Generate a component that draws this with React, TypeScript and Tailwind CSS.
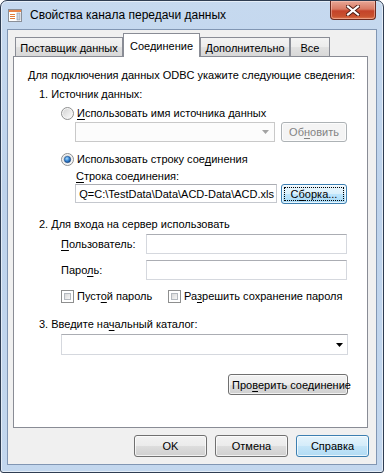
import type { ReactNode } from "react"

const ui = "font-['Liberation_Sans',Arial,sans-serif] text-[11px] leading-[16px] text-black whitespace-nowrap"

function U({ children }: { children: ReactNode }) {
  return <span className="underline underline-offset-[2px]">{children}</span>
}

function Radio({ checked }: { checked?: boolean }) {
  return (
    <svg width="13" height="13" viewBox="0 0 13 13" className="shrink-0">
      <defs>
        <linearGradient id={checked ? "rb1" : "rb0"} x1="0" y1="0" x2="1" y2="1">
          <stop offset="0" stopColor="#d4d4d4" />
          <stop offset="1" stopColor="#fbfbfb" />
        </linearGradient>
        <radialGradient id="rdot" cx="0.4" cy="0.35" r="0.7">
          <stop offset="0" stopColor="#a9dcff" />
          <stop offset="0.5" stopColor="#3b8ad8" />
          <stop offset="1" stopColor="#0f3f80" />
        </radialGradient>
      </defs>
      <circle cx="6.5" cy="6.5" r="6" fill="#f4f4f4" stroke="#8e8f8f" />
      <circle cx="6.5" cy="6.5" r="4.5" fill={`url(#${checked ? "rb1" : "rb0"})`} />
      {checked && <circle cx="6.5" cy="6.5" r="3.2" fill="url(#rdot)" stroke="#1d4b84" strokeWidth="0.6" />}
    </svg>
  )
}

function Check() {
  return (
    <div className="w-[13px] h-[13px] shrink-0 border border-[#8e8f8f] bg-white p-[2px]">
      <div className="w-full h-full border border-[#b4b9bf] bg-[linear-gradient(135deg,#d9d9d9_0%,#f7f7f7_100%)]" />
    </div>
  )
}

function Arrow({ color }: { color: string }) {
  return (
    <svg width="7" height="4" viewBox="0 0 7 4">
      <path d="M0 0h7L3.5 4z" fill={color} />
    </svg>
  )
}

type Kind = "normal" | "disabled" | "focus" | "default"

function Btn({ children, w, h, kind = "normal" }: { children: ReactNode; w: string; h: string; kind?: Kind }) {
  const look =
    kind === "disabled"
      ? "border-[#adb2b5] bg-[#f4f4f4] text-[#838383]"
      : kind === "normal"
      ? "border-[#707070] bg-[linear-gradient(180deg,#f2f2f2_0%,#ebebeb_50%,#dddddd_51%,#cfcfcf_100%)]"
      : kind === "focus"
      ? "border-[#3c7fb1] bg-[linear-gradient(180deg,#eaf6fd_0%,#d9f0fc_50%,#bee6fd_51%,#a7d9f5_100%)]"
      : "border-[#3c7fb1] bg-[linear-gradient(180deg,#e5f4fc_0%,#d4ecfa_50%,#c4e5f8_51%,#b1dbf4_100%)]"
  return (
    <div className={`${w} ${h} shrink-0 flex rounded-[3px] border ${look} shadow-[inset_0_0_0_1px_rgba(255,255,255,0.7)]`}>
      <div
        className={`flex-1 flex items-center justify-center m-[2px] ${
          kind === "focus" ? "border border-dotted border-black" : "border border-transparent"
        }`}
      >
        {children}
      </div>
    </div>
  )
}

function TitleIcon() {
  return (
    <svg width="15" height="15" viewBox="0 0 15 15" className="shrink-0">
      <rect x="0.5" y="1.5" width="13" height="12" fill="#fff" stroke="#8a8f98" />
      <rect x="1" y="2" width="12" height="2" fill="#e8834a" />
      <rect x="2" y="6" width="5" height="1" fill="#e07b3c" />
      <rect x="2" y="8" width="5" height="1" fill="#e07b3c" />
      <rect x="2" y="10" width="5" height="1" fill="#e07b3c" />
      <rect x="9" y="5" width="3" height="7" fill="#cfd6e2" stroke="#7f8ea6" strokeWidth="0.6" />
    </svg>
  )
}

function CloseBtn() {
  return (
    <div className="w-[46px] h-[19px] shrink-0 flex items-center justify-center rounded-b-[4px] border border-t-0 border-[#6b2a1f] bg-[linear-gradient(180deg,#e8a796_0%,#d97a64_45%,#c4432a_55%,#c8512f_85%,#e07a52_100%)] shadow-[inset_0_0_0_1px_rgba(255,210,200,0.45)]">
      <svg width="14" height="11" viewBox="0 0 14 11">
        <path d="M2 1.5L12 9.5M12 1.5L2 9.5" stroke="#4b1a12" strokeWidth="4" strokeLinecap="square" />
        <path d="M2 1.5L12 9.5M12 1.5L2 9.5" stroke="#fff" strokeWidth="2.2" strokeLinecap="square" />
      </svg>
    </div>
  )
}

function Tab({ label, w, selected }: { label: string; w: string; selected?: boolean }) {
  if (selected) {
    return (
      <div className={`${w} h-[24px] -mb-px relative z-10 flex justify-center pt-[4px] border border-b-0 border-[#898c95] bg-white`}>
        {label}
      </div>
    )
  }
  return (
    <div
      className={`${w} h-[19px] flex justify-center pt-[2px] border border-b-0 border-[#898c95] bg-[linear-gradient(180deg,#f3f3f3_0%,#ececec_50%,#e1e1e1_51%,#d8d8d8_100%)]`}
    >
      {label}
    </div>
  )
}

export default function App() {
  return (
    <div
      className={`${ui} w-[384px] h-[473px] flex flex-col rounded-t-[7px] rounded-b-[3px] border border-[#2f3d52] bg-[linear-gradient(180deg,#c6d9ef_0%,#bed3ec_40%,#c3d7ee_100%)] shadow-[inset_0_0_0_1px_rgba(255,255,255,0.55)]`}
    >
      {/* title bar */}
      <div className="h-[28px] flex items-start text-[12px]">
        <div className="ml-[7px] mt-[7px]">
          <TitleIcon />
        </div>
        <div className="ml-[7px] mt-[6px] flex-1">Свойства канала передачи данных</div>
        <div className="mr-[7px]">
          <CloseBtn />
        </div>
      </div>

      {/* client */}
      <div className="mx-[6px] h-[436px] flex flex-col border border-[#8196b3] bg-[#f0f0f0]">
        {/* tabs */}
        <div className="ml-[7px] mt-[3px] flex items-end">
          <Tab label="Поставщик данных" w="w-[108px]" />
          <Tab label="Соединение" w="w-[77px]" selected />
          <Tab label="Дополнительно" w="w-[90px]" />
          <Tab label="Все" w="w-[40px]" />
        </div>

        <div className="ml-[5px] w-[355px] h-[372px] flex flex-col border border-[#898c95] bg-white">
          <div className="ml-[14px] mt-[10px] h-[16px]">Для подключения данных ODBC укажите следующие сведения:</div>
          <div className="ml-[25px] mt-[3px] h-[16px]">1. Источник данных:</div>

          <div className="ml-[47px] mt-[3px] h-[16px] flex items-center gap-[3px]">
            <Radio />
            <span>
              <U>И</U>спользовать имя источника данных
            </span>
          </div>
          <div className="ml-[61px] mt-[1px] h-[20px] flex gap-[6px]">
            <div className="w-[200px] h-[20px] flex items-center justify-end pr-[5px] border border-[#c9c9c9] bg-[#fcfcfc]">
              <Arrow color="#a3a3a3" />
            </div>
            <Btn w="w-[66px]" h="h-[20px]" kind="disabled">
              Об<U>н</U>овить
            </Btn>
          </div>

          <div className="ml-[47px] mt-[9px] h-[16px] flex items-center gap-[3px]">
            <Radio checked />
            <span>
              Использовать строку сое<U>д</U>инения
            </span>
          </div>
          <div className="ml-[62px] mt-[1px] h-[16px]">
            <U>С</U>трока соединения:
          </div>
          <div className="ml-[61px] h-[20px] flex gap-[4px]">
            <div className="w-[202px] h-[19px] flex items-center justify-end pr-[2px] border border-[#c5c8ce] border-t-[#abadb3] bg-white">
              Q=C:\TestData\Data\ACD-Data\ACD.xls
            </div>
            <Btn w="w-[66px]" h="h-[20px]" kind="focus">
              С<U>б</U>орка...
            </Btn>
          </div>

          <div className="ml-[25px] mt-[12px] h-[16px]">2. Для входа на сервер использовать</div>
          <div className="ml-[47px] mt-[2px] h-[20px] flex items-center">
            <span className="w-[85px]">
              <U>П</U>ользователь:
            </span>
            <div className="w-[201px] h-[20px] border border-[#d5d8de] border-t-[#abadb3] bg-white" />
          </div>
          <div className="ml-[47px] mt-[6px] h-[20px] flex items-center">
            <span className="w-[85px]">
              Паро<U>л</U>ь:
            </span>
            <div className="w-[201px] h-[20px] border border-[#d5d8de] border-t-[#abadb3] bg-white" />
          </div>
          <div className="ml-[47px] mt-[8px] h-[16px] flex items-center">
            <div className="w-[107px] flex items-center gap-[3px]">
              <Check />
              <span>
                Пуст<U>о</U>й пароль
              </span>
            </div>
            <div className="flex items-center gap-[3px]">
              <Check />
              <span>
                Ра<U>з</U>решить сохранение пароля
              </span>
            </div>
          </div>

          <div className="ml-[25px] mt-[12px] h-[16px]">
            3. Введите на<U>ч</U>альный каталог:
          </div>
          <div className="ml-[47px] mt-[2px] w-[287px] h-[21px] flex items-center justify-end pr-[4px] border border-[#d5d8de] border-t-[#abadb3] bg-white">
            <Arrow color="#000" />
          </div>

          <div className="ml-[214px] mt-[19px]">
            <Btn w="w-[120px]" h="h-[21px]">
              Про<U>в</U>ерить соединение
            </Btn>
          </div>
        </div>

        <div className="mt-[7px] pr-[7px] flex justify-end gap-[8px]">
          <Btn w="w-[73px]" h="h-[22px]">
            OK
          </Btn>
          <Btn w="w-[73px]" h="h-[22px]">
            Отмена
          </Btn>
          <Btn w="w-[73px]" h="h-[22px]" kind="default">
            Справка
          </Btn>
        </div>
      </div>
    </div>
  )
}
